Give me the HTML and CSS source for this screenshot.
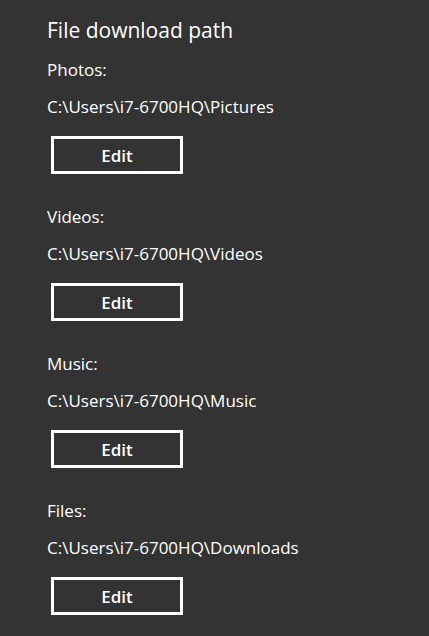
FILE: index.html
```html
<!DOCTYPE html>
<html>
<head>
<meta charset="utf-8">
<link rel="stylesheet" href="styles.css">
</head>
<body>
<main class="panel">
  <h1 class="title">File download path</h1>
  <section class="group">
    <div class="label">Photos:</div>
    <div class="path">C:\Users\i7-6700HQ\Pictures</div>
    <button class="edit">Edit</button>
  </section>
  <section class="group">
    <div class="label">Videos:</div>
    <div class="path">C:\Users\i7-6700HQ\Videos</div>
    <button class="edit">Edit</button>
  </section>
  <section class="group">
    <div class="label">Music:</div>
    <div class="path">C:\Users\i7-6700HQ\Music</div>
    <button class="edit">Edit</button>
  </section>
  <section class="group">
    <div class="label">Files:</div>
    <div class="path">C:\Users\i7-6700HQ\Downloads</div>
    <button class="edit">Edit</button>
  </section>
</main>
</body>
</html>
```
FILE: styles.css
```css
html, body {
  margin: 0;
  padding: 0;
  background: #333333;
  height: 100%;
}
.panel {
  font-family: "Open Sans", "Noto Sans", sans-serif;
  color: #ffffff;
  padding: 16px 0 0 47px;
  display: flex;
  flex-direction: column;
}
.title {
  margin: 0;
  font-size: 21px;
  font-weight: 400;
  line-height: 28px;
  height: 42px;
}
.group {
  display: flex;
  flex-direction: column;
  align-items: flex-start;
  height: 147px;
}
.label {
  font-size: 17px;
  line-height: 24px;
  height: 37px;
}
.path {
  font-size: 17px;
  line-height: 24px;
  height: 41px;
}
.edit {
  margin-left: 4px;
  width: 132px;
  height: 38px;
  box-sizing: border-box;
  border: 3px solid #ffffff;
  background: transparent;
  color: #ffffff;
  font-family: inherit;
  font-size: 17px;
  font-weight: 600;
  padding: 0;
  display: flex;
  align-items: center;
  justify-content: center;
}
```
